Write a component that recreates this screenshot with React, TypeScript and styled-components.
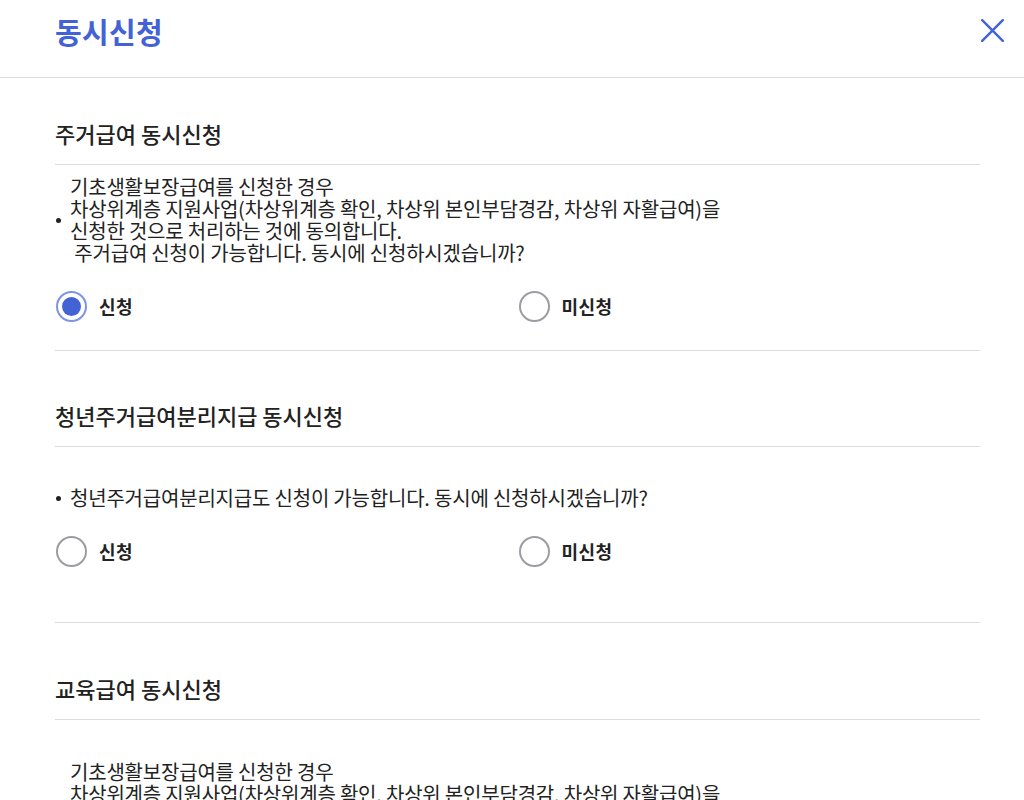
import React, { useState } from "react";
import styled, { createGlobalStyle } from "styled-components";

const Global = createGlobalStyle`
  html, body { margin: 0; padding: 0; background: #fff; }
  body { font-family: "Noto Sans CJK KR", "Noto Sans", sans-serif; color: #222; }
  * { box-sizing: border-box; }
`;

const Page = styled.div`
  width: 1024px;
  height: 800px;
  overflow: hidden;
  background: #fff;
`;

const Header = styled.header`
  height: 78px;
  border-bottom: 1px solid #dcdcdc;
  display: flex;
  align-items: flex-start;
  justify-content: space-between;
  padding: 11px 20px 0 55px;
`;

const Title = styled.h1`
  margin: 0;
  font-size: 29px;
  line-height: 40px;
  font-weight: 700;
  color: #4262d6;
  letter-spacing: 0.3px;
`;

const CloseButton = styled.button`
  width: 23px;
  height: 23px;
  margin-top: 8px;
  padding: 0;
  border: 0;
  background: transparent;
  cursor: pointer;
  display: flex;
`;

const Body = styled.main`
  padding: 0 44px 0 55px;
`;

const Section = styled.section<{ $top: number; $bottom: number; $last?: boolean }>`
  padding-top: ${(p) => p.$top}px;
  padding-bottom: ${(p) => p.$bottom}px;
  border-bottom: ${(p) => (p.$last ? "none" : "1px solid #dcdcdc")};
`;

const SectionTitle = styled.h2`
  margin: 0;
  font-size: 22px;
  line-height: 30px;
  font-weight: 500;
  color: #222;
  padding-bottom: 16px;
  border-bottom: 1px solid #dcdcdc;
`;

const Notice = styled.div<{ $gap: number }>`
  margin-top: ${(p) => p.$gap}px;
  display: flex;
  align-items: center;
  gap: 9px;
`;

const Bullet = styled.span`
  flex: none;
  width: 5px;
  height: 5px;
  border-radius: 50%;
  background: #222;
  margin-left: 1px;
`;

const NoticeText = styled.p`
  margin: 0;
  font-size: 20px;
  line-height: 22px;
  color: #222;
  white-space: pre;
  letter-spacing: -0.2px;
`;

const RadioRow = styled.div`
  margin-top: 27px;
  display: grid;
  grid-template-columns: 1fr 1fr;
`;

const RadioLabel = styled.label`
  display: flex;
  align-items: center;
  gap: 12px;
  cursor: pointer;
  font-size: 18px;
  font-weight: 700;
  color: #222;
  line-height: 31px;
  letter-spacing: 0.5px;
  margin-left: 1px;
`;

const HiddenInput = styled.input`
  display: none;
`;

const Circle = styled.span<{ $on: boolean }>`
  width: 31px;
  height: 31px;
  border-radius: 50%;
  border: 2px solid ${(p) => (p.$on ? "#7d93e4" : "#9c9ca3")};
  display: flex;
  align-items: center;
  justify-content: center;
  background: #fff;
  &::after {
    content: "";
    width: 19px;
    height: 19px;
    border-radius: 50%;
    background: ${(p) => (p.$on ? "#4262d6" : "transparent")};
  }
`;

type Item = {
  title: string;
  text: string;
  top: number;
  gap: number;
  bottom: number;
  initial: string;
  last?: boolean;
};

const longText =
  "기초생활보장급여를 신청한 경우\n차상위계층 지원사업(차상위계층 확인, 차상위 본인부담경감, 차상위 자활급여)을\n신청한 것으로 처리하는 것에 동의합니다.\n 주거급여 신청이 가능합니다. 동시에 신청하시겠습니까?";

const items: Item[] = [
  { title: "주거급여 동시신청", text: longText, top: 40, gap: 11, bottom: 28, initial: "Y" },
  {
    title: "청년주거급여분리지급 동시신청",
    text: "청년주거급여분리지급도 신청이 가능합니다. 동시에 신청하시겠습니까?",
    top: 49,
    gap: 40,
    bottom: 55,
    initial: "",
  },
  {
    title: "교육급여 동시신청",
    text: longText.replace("주거급여 신청이", "교육급여 신청이"),
    top: 50,
    gap: 41,
    bottom: 28,
    initial: "",
    last: true,
  },
];

function RadioGroup({ name, initial }: { name: string; initial: string }) {
  const [value, setValue] = useState(initial);
  const opts = [
    { v: "Y", label: "신청" },
    { v: "N", label: "미신청" },
  ];
  return (
    <RadioRow>
      {opts.map((o) => (
        <RadioLabel key={o.v}>
          <HiddenInput
            type="radio"
            name={name}
            checked={value === o.v}
            onChange={() => setValue(o.v)}
          />
          <Circle $on={value === o.v} />
          {o.label}
        </RadioLabel>
      ))}
    </RadioRow>
  );
}

export default function App() {
  return (
    <Page>
      <Global />
      <Header>
        <Title>동시신청</Title>
        <CloseButton aria-label="닫기">
          <svg width="23" height="23" viewBox="0 0 23 23">
            <path d="M1.2 1.2 L21.8 21.8 M21.8 1.2 L1.2 21.8" stroke="#4262d6" strokeWidth="2.4" strokeLinecap="round" />
          </svg>
        </CloseButton>
      </Header>
      <Body>
        {items.map((it, i) => (
          <Section key={i} $top={it.top} $bottom={it.bottom} $last={it.last}>
            <SectionTitle>{it.title}</SectionTitle>
            <Notice $gap={it.gap}>
              <Bullet />
              <NoticeText>{it.text}</NoticeText>
            </Notice>
            <RadioGroup name={`r${i}`} initial={it.initial} />
          </Section>
        ))}
      </Body>
    </Page>
  );
}
